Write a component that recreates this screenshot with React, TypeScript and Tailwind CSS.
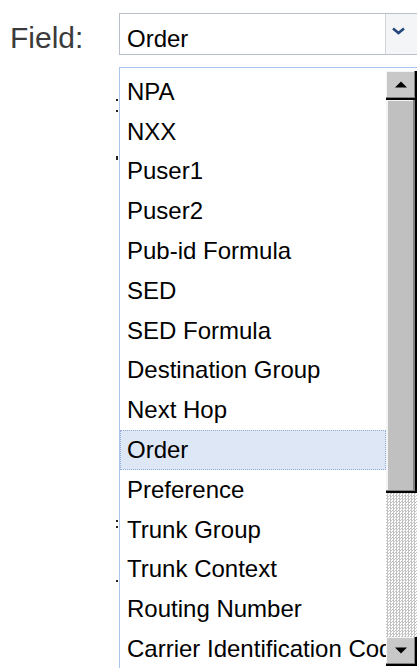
import React from 'react'

const fields = [
  'NPA',
  'NXX',
  'Puser1',
  'Puser2',
  'Pub-id Formula',
  'SED',
  'SED Formula',
  'Destination Group',
  'Next Hop',
  'Order',
  'Preference',
  'Trunk Group',
  'Trunk Context',
  'Routing Number',
  'Carrier Identification Code',
]

const selected = 'Order'

// marks from the form labels that peek out behind the open list
const strayDots = [
  { top: 99, h: 2 },
  { top: 110, h: 2 },
  { top: 156, h: 4 },
  { top: 520, h: 2 },
  { top: 526, h: 2 },
  { top: 580, h: 2 },
]

function ScrollButton({ dir }: { dir: 'up' | 'down' }) {
  return (
    <div className="flex h-[29px] items-center justify-center border-r-2 border-b-2 border-black bg-[#c8c8c8] shadow-[inset_-1px_-1px_#808080,inset_1px_1px_#f4f4f4]">
      <svg width="12" height="7" viewBox="0 0 12 7">
        {dir === 'up' ? <path d="M0 6.5 L6 0.5 L12 6.5 Z" fill="#000" /> : <path d="M0 0.5 L6 6.5 L12 0.5 Z" fill="#000" />}
      </svg>
    </div>
  )
}

export default function App() {
  return (
    <div className="relative h-[668px] w-[417px] overflow-hidden bg-white font-['Liberation_Sans',Arial,sans-serif]">
      {/* Field row */}
      <div className="flex items-start pt-[13px] pl-[10px]">
        <label className="w-[109px] shrink-0 pt-[10px] text-[30px] leading-[30px] text-[#3b3b3b]">Field:</label>
        <div className="flex h-[42px] w-[320px] shrink-0 border border-[#b9c0ca] bg-white">
          <div className="w-[265px] shrink-0 pt-[13px] pl-[7px] text-[24px] leading-[24px] text-black">{selected}</div>
          <div className="flex flex-1 items-start border-l border-[#cfd5dc] bg-[#f4f5f7] pt-[13px] pl-[6px]">
            <svg width="13" height="8" viewBox="0 0 13 8">
              <path d="M1 1.5 L6.5 6 L12 1.5" fill="none" stroke="#24487c" strokeWidth="2.6" />
            </svg>
          </div>
        </div>
      </div>

      {/* Open option list */}
      <div className="mt-[12px] ml-[119px] flex h-[620px] border-t border-l border-[#a9c6ef] bg-white">
        <ul className="w-[266px] shrink-0 pt-[4px]">
          {fields.map((f) => (
            <li
              key={f}
              className={
                f === selected
                  ? 'flex h-[39.8px] items-center overflow-hidden whitespace-nowrap border border-dotted border-[#93abd8] bg-[#dee7f6] pl-[6px] text-[24px] leading-[24px] text-black'
                  : 'flex h-[39.8px] items-center overflow-hidden whitespace-nowrap pl-[7px] text-[24px] leading-[24px] text-black'
              }
            >
              {f}
            </li>
          ))}
        </ul>
        <div className="flex w-[31px] shrink-0 flex-col pt-[3px]">
          <ScrollButton dir="up" />
          <div className="h-[393px] border-r-2 border-b-2 border-black bg-[#c0c0c0] shadow-[inset_-2px_-1px_#808080,inset_2px_1px_#f4f4f4]" />
          <div className="h-[144px] bg-[repeating-conic-gradient(#c4c4c4_0_25%,#ffffff_0_50%)] bg-[length:3px_3px]" />
          <ScrollButton dir="down" />
        </div>
      </div>

      {strayDots.map((d) => (
        <span
          key={d.top}
          className="absolute left-[116px] w-[2px] bg-[#222]"
          style={{ top: d.top, height: d.h }}
        />
      ))}
    </div>
  )
}
